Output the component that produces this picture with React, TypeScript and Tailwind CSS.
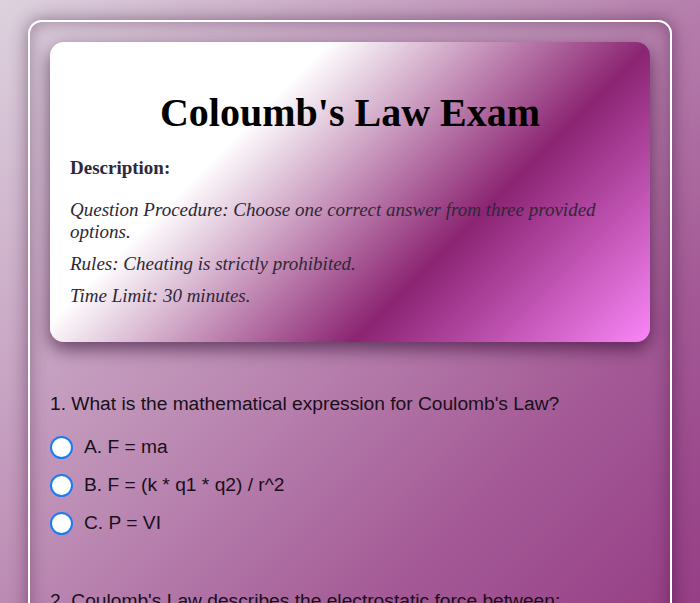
const questions = [
  {
    text: "1. What is the mathematical expression for Coulomb's Law?",
    options: ['A. F = ma', 'B. F = (k * q1 * q2) / r^2', 'C. P = VI'],
  },
  {
    text: "2. Coulomb's Law describes the electrostatic force between:",
    options: ['A. Two masses', 'B. Two charged particles', 'C. Two magnets'],
  },
];

export default function App() {
  return (
    <div
      className="min-h-screen bg-fixed bg-[linear-gradient(135deg,#ddd2de_0%,#bd8db5_45%,#a45a96_75%,#963e86_100%)] pt-5 pb-10"
      style={{ fontFamily: '"Liberation Sans", Arial, sans-serif' }}
    >
      <div className="mx-auto w-[644px] rounded-[14px] border-2 border-white p-5 shadow-[0_0_18px_rgba(40,0,40,0.45),inset_0_0_18px_rgba(40,0,40,0.35)]">
        <div
          className="rounded-[14px] bg-[linear-gradient(135deg,#ffffff_31%,#8b2472_67%,#f986f8_100%)] px-5 pt-5 pb-[35px] shadow-[0_7px_18px_rgba(40,0,40,0.6)]"
          style={{ fontFamily: '"Liberation Serif", "Times New Roman", serif' }}
        >
          <h1 className="mt-[28px] mb-[21px] text-center text-[40px] leading-[46px] font-bold text-black">
            Coloumb's Law Exam
          </h1>
          <h3 className="mb-[20px] text-[19px] leading-[22px] font-bold text-[#2e2838]">Description:</h3>
          <div className="flex flex-col gap-[10px] text-[19px] leading-[22px] italic text-[#2e2838]">
            <p>Question Procedure: Choose one correct answer from three provided options.</p>
            <p>Rules: Cheating is strictly prohibited.</p>
            <p>Time Limit: 30 minutes.</p>
          </div>
        </div>

        <div className="mt-[51px] flex flex-col gap-[48px]">
          {questions.map((q, i) => (
            <div key={i}>
              <p className="mb-[13px] text-[19.2px] leading-[22px] text-[#180f1a]">{q.text}</p>
              {q.options.map((opt, j) => (
                <label key={j} className="flex h-[38px] items-center gap-[11px]">
                  <span className="h-[23px] w-[23px] shrink-0 rounded-full border-[2.5px] border-[#1a7cf0] bg-white" />
                  <span className="text-[19.2px] leading-[22px] text-[#180f1a]">{opt}</span>
                </label>
              ))}
            </div>
          ))}
        </div>
      </div>
    </div>
  );
}
